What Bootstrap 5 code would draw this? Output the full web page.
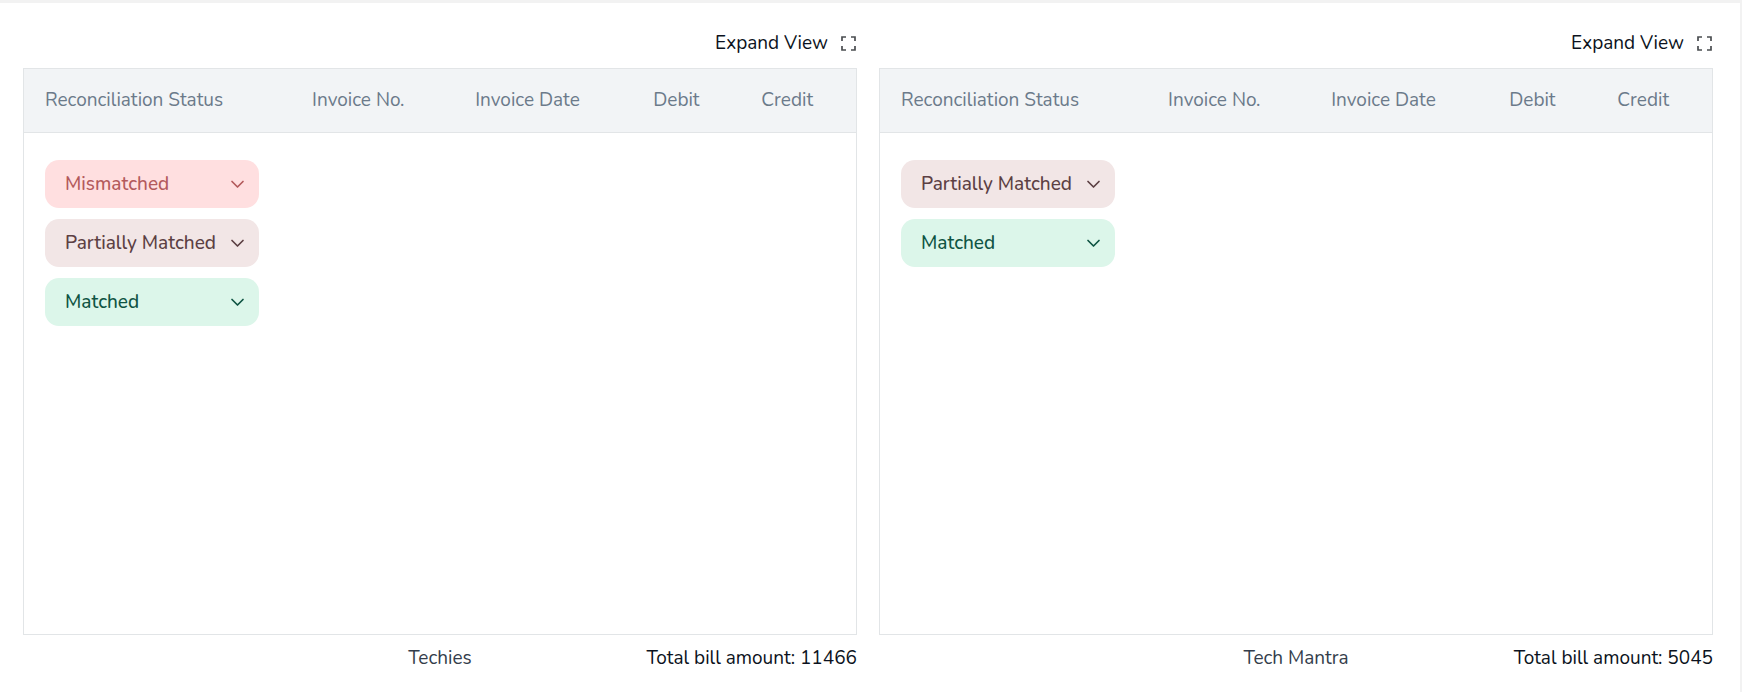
<!DOCTYPE html>
<html lang="en">
<head>
<meta charset="utf-8">
<meta name="viewport" content="width=device-width, initial-scale=1">
<title>Invoice reconciliation</title>
<link href="https://cdn.jsdelivr.net/npm/bootstrap@5.3.0/dist/css/bootstrap.min.css" rel="stylesheet">
<style>
  body {
    font-family: Nunito, Lato, "Liberation Sans", sans-serif;
    font-size: 19px;
    line-height: 24px;
    color: #0b1220;
    background: #fff;
    border-top: 3px solid #f2f2f2;
    border-right: 2px solid #f2f2f2;
  }
  .page-main { padding: 28px 27px 22px 23px; gap: 22px; }
  .ledger { flex: 1 1 0; min-width: 0; }
  .expand-btn { color: #0b1220; gap: 13px; font-size: 19px; line-height: 24px; }
  .expand-btn svg { color: #4a4d50; margin-right: 1px; }
  .ledger-box { border: 1px solid #e2e5e7; margin-top: 13px; }
  .ledger-table { table-layout: fixed; line-height: 24px; }
  .ledger-table thead th {
    background: #f2f4f6;
    color: #6b7a8a;
    font-weight: 400;
    padding: 19px 0 20px 21px;
    border-bottom: 1px solid #e2e5e7;
    white-space: nowrap;
  }
  .ledger-table tbody td { padding: 0 0 11px 21px; border: 0; }
  .ledger-table tbody tr:first-child td { padding-top: 27px; }
  .col-status { width: 32.1%; }
  .col-number { width: 19.6%; }
  .col-date { width: 21.4%; }
  .col-debit { width: 13%; }
  .col-credit { width: 13.9%; }
  .status-btn {
    width: 214px;
    height: 48px;
    padding: 0 14px 0 20px;
    border: 0;
    border-radius: 14px;
    font-weight: 500;
    white-space: nowrap;
  }
  .is-mismatched { background: #ffdfe0; color: #b35a5c; }
  .is-partial { background: #f2e6e6; color: #5c4043; }
  .is-matched { background: #dcf6ea; color: #0f5443; }
  .ledger-foot { margin-top: 11px; }
  .ledger-name { color: #333d4b; }
</style>
</head>
<body class="d-flex flex-column min-vh-100">
<main class="page-main d-flex flex-grow-1">
  <section class="ledger d-flex flex-column" aria-label="Techies">
    <div class="d-flex justify-content-end">
      <button type="button" class="expand-btn btn border-0 p-0 d-flex align-items-center">Expand View
        <svg width="15" height="15" viewBox="0 0 15 15" fill="none" stroke="currentColor" stroke-width="1.7" aria-hidden="true"><path d="M1 5V1H5M10 1H14V5M14 10V14H10M5 14H1V10"/></svg>
      </button>
    </div>
    <div class="ledger-box flex-grow-1">
      <table class="ledger-table table table-borderless mb-0">
        <thead><tr><th class="col-status" scope="col">Reconciliation Status</th><th class="col-number" scope="col">Invoice No.</th><th class="col-date" scope="col">Invoice Date</th><th class="col-debit" scope="col">Debit</th><th class="col-credit" scope="col">Credit</th></tr></thead>
        <tbody>
          <tr><td colspan="5"><button type="button" aria-expanded="false" class="status-btn is-mismatched d-flex align-items-center justify-content-between">Mismatched <svg width="15" height="9" viewBox="0 0 15 9" fill="none" stroke="currentColor" stroke-width="1.7" stroke-linecap="round" stroke-linejoin="round" aria-hidden="true"><path d="M2 1.5L7.500 7L13 1.500"/></svg></button></td></tr>
          <tr><td colspan="5"><button type="button" aria-expanded="false" class="status-btn is-partial d-flex align-items-center justify-content-between">Partially Matched <svg width="15" height="9" viewBox="0 0 15 9" fill="none" stroke="currentColor" stroke-width="1.7" stroke-linecap="round" stroke-linejoin="round" aria-hidden="true"><path d="M2 1.5L7.500 7L13 1.500"/></svg></button></td></tr>
          <tr><td colspan="5"><button type="button" aria-expanded="false" class="status-btn is-matched d-flex align-items-center justify-content-between">Matched <svg width="15" height="9" viewBox="0 0 15 9" fill="none" stroke="currentColor" stroke-width="1.7" stroke-linecap="round" stroke-linejoin="round" aria-hidden="true"><path d="M2 1.5L7.500 7L13 1.500"/></svg></button></td></tr>
        </tbody>
      </table>
    </div>
    <div class="ledger-foot row g-0">
      <div class="ledger-name col-4 offset-4 text-center">Techies</div>
      <div class="col-4 text-end text-nowrap">Total bill amount: 11466</div>
    </div>
  </section>
  <section class="ledger d-flex flex-column" aria-label="Tech Mantra">
    <div class="d-flex justify-content-end">
      <button type="button" class="expand-btn btn border-0 p-0 d-flex align-items-center">Expand View
        <svg width="15" height="15" viewBox="0 0 15 15" fill="none" stroke="currentColor" stroke-width="1.7" aria-hidden="true"><path d="M1 5V1H5M10 1H14V5M14 10V14H10M5 14H1V10"/></svg>
      </button>
    </div>
    <div class="ledger-box flex-grow-1">
      <table class="ledger-table table table-borderless mb-0">
        <thead><tr><th class="col-status" scope="col">Reconciliation Status</th><th class="col-number" scope="col">Invoice No.</th><th class="col-date" scope="col">Invoice Date</th><th class="col-debit" scope="col">Debit</th><th class="col-credit" scope="col">Credit</th></tr></thead>
        <tbody>
          <tr><td colspan="5"><button type="button" aria-expanded="false" class="status-btn is-partial d-flex align-items-center justify-content-between">Partially Matched <svg width="15" height="9" viewBox="0 0 15 9" fill="none" stroke="currentColor" stroke-width="1.7" stroke-linecap="round" stroke-linejoin="round" aria-hidden="true"><path d="M2 1.5L7.500 7L13 1.500"/></svg></button></td></tr>
          <tr><td colspan="5"><button type="button" aria-expanded="false" class="status-btn is-matched d-flex align-items-center justify-content-between">Matched <svg width="15" height="9" viewBox="0 0 15 9" fill="none" stroke="currentColor" stroke-width="1.7" stroke-linecap="round" stroke-linejoin="round" aria-hidden="true"><path d="M2 1.5L7.500 7L13 1.500"/></svg></button></td></tr>
        </tbody>
      </table>
    </div>
    <div class="ledger-foot row g-0">
      <div class="ledger-name col-4 offset-4 text-center">Tech Mantra</div>
      <div class="col-4 text-end text-nowrap">Total bill amount: 5045</div>
    </div>
  </section>
</main>
<script src="https://cdn.jsdelivr.net/npm/bootstrap@5.3.0/dist/js/bootstrap.bundle.min.js"></script>
</body>
</html>
